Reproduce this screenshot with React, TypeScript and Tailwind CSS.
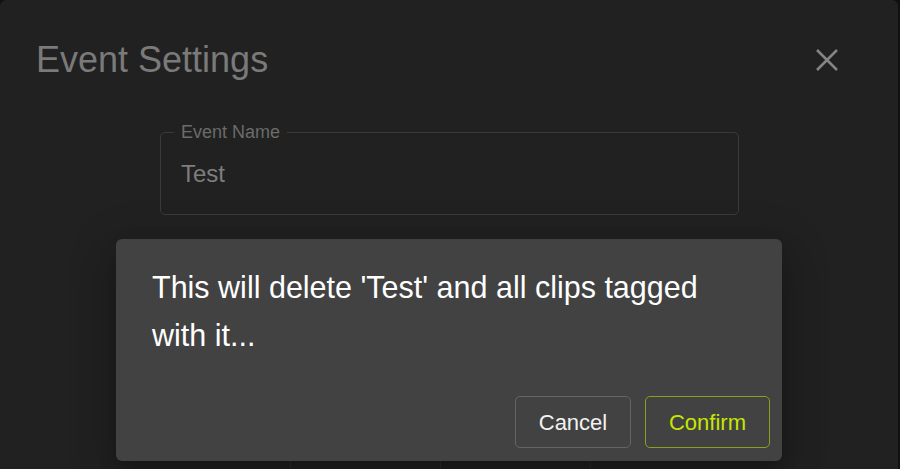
const segments = ["Day", "Week", "Month", "Year"]

export default function App() {
  return (
    <div className="relative h-[469px] w-full overflow-hidden bg-[#101010] font-['Liberation_Sans',Arial,sans-serif]">
      {/* Event settings panel (dimmed behind the confirm dialog) */}
      <div className="mr-[2px] h-full rounded-t-[6px] bg-[#212121]">
        <div className="flex items-center justify-between pl-[36px] pr-[60px] pt-[42px]">
          <h1 className="text-[36px] leading-[36px] text-[#7a7a7a]">Event Settings</h1>
          <svg width="22" height="22" viewBox="0 0 22 22" className="text-[#858585]">
            <path d="M1 1L21 21M21 1L1 21" stroke="currentColor" strokeWidth="2.5" />
          </svg>
        </div>

        <fieldset className="ml-[160px] mt-[45px] w-[579px] rounded-[5px] border border-[#3a3a3a] pb-[28px] pl-[20px] pt-[21px]">
          <legend className="ml-[-7px] px-[7px] text-[18px] leading-[18px] text-[#6b6b6b]">Event Name</legend>
          <div className="text-[24px] leading-[24px] text-[#7e7e7e]">Test</div>
        </fieldset>

        <div className="ml-[140px] mt-[224px] flex">
          {segments.map((s, i) => (
            <div
              key={s}
              className={`h-[60px] w-[150px] ${i > 0 ? "border-l border-[#2c2c2c]" : ""}`}
            />
          ))}
        </div>
      </div>

      {/* Confirm dialog */}
      <div className="absolute left-[116px] top-[239px] flex h-[222px] w-[666px] flex-col justify-between rounded-[6px] bg-[#424242] shadow-[0_11px_15px_-7px_rgba(0,0,0,0.2),0_24px_38px_3px_rgba(0,0,0,0.14),0_9px_46px_8px_rgba(0,0,0,0.12)]">
        <p className="pl-[36px] pr-[60px] pt-[24px] text-[30.5px] leading-[48px] text-white">
          This will delete 'Test' and all clips tagged with it...
        </p>
        <div className="flex justify-end gap-[14px] pb-[13px] pr-[12px]">
          <button className="h-[52px] w-[116px] rounded-[5px] border border-[#656565] text-[22px] text-[#f2f2f2]">
            Cancel
          </button>
          <button className="h-[52px] w-[125px] rounded-[5px] border border-[#8c9f1e] text-[22px] text-[#c6e600]">
            Confirm
          </button>
        </div>
      </div>
    </div>
  )
}
